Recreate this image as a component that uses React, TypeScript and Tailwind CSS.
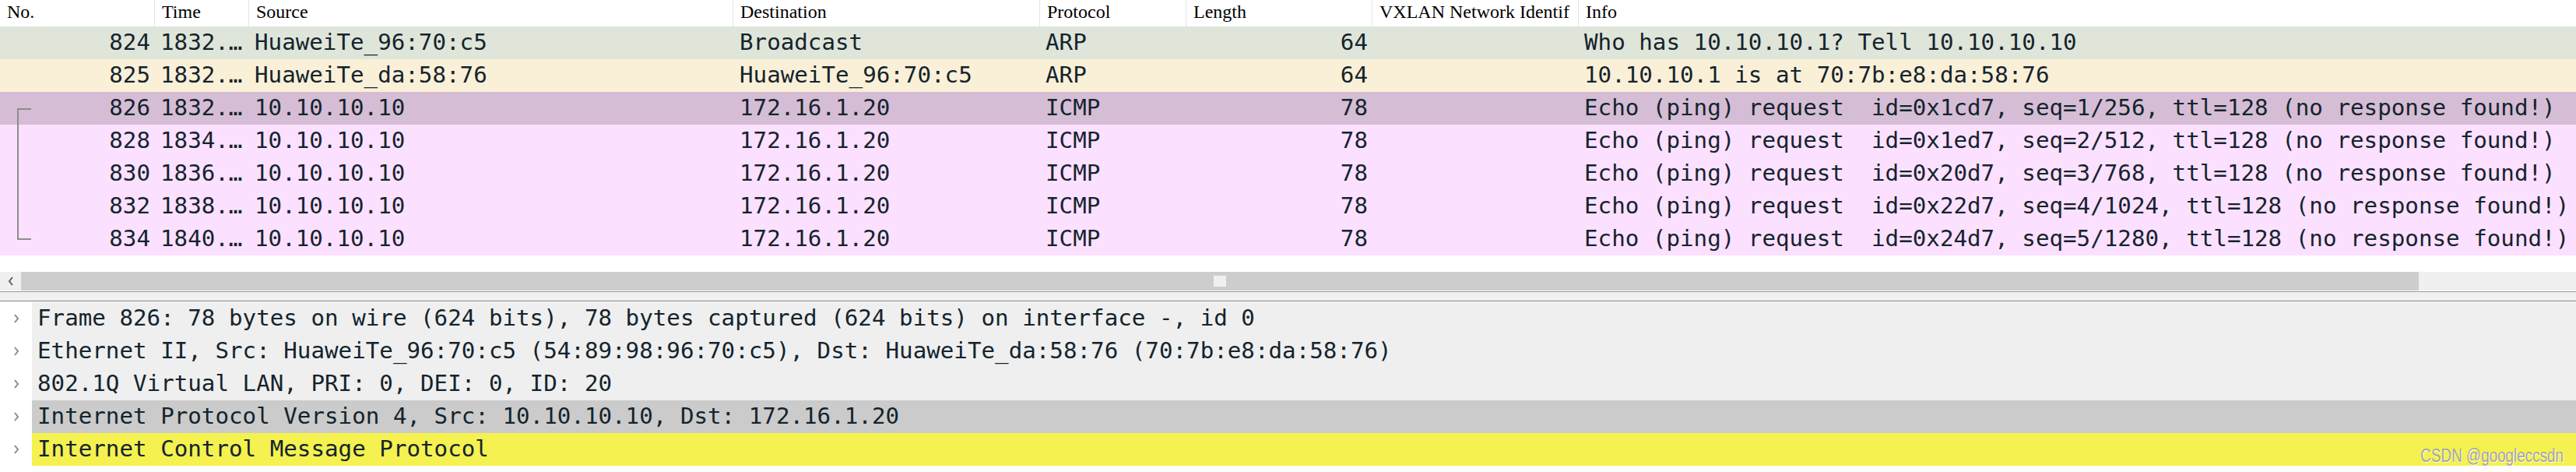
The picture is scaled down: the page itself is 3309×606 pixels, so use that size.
import React from 'react';

type Mark = 'start' | 'mid' | 'end' | null;

type Packet = {
  no: string;
  time: string;
  src: string;
  dst: string;
  proto: string;
  len: string;
  info: string;
  bg: string;
  mark: Mark;
};

const columns = [
  { label: 'No.', w: 'w-[199px]' },
  { label: 'Time', w: 'w-[121px]' },
  { label: 'Source', w: 'w-[622px]' },
  { label: 'Destination', w: 'w-[394px]' },
  { label: 'Protocol', w: 'w-[188px]' },
  { label: 'Length', w: 'w-[239px]' },
  { label: 'VXLAN Network Identif', w: 'w-[265px]' },
  { label: 'Info', w: 'flex-1' },
];

const echo = (id: string, seq: string) =>
  `Echo (ping) request  id=${id}, seq=${seq}, ttl=128 (no response found!)`;

const packets: Packet[] = [
  { no: '824', time: '1832.…', src: 'HuaweiTe_96:70:c5', dst: 'Broadcast', proto: 'ARP', len: '64', info: 'Who has 10.10.10.1? Tell 10.10.10.10', bg: 'bg-[#dfe5d9]', mark: null },
  { no: '825', time: '1832.…', src: 'HuaweiTe_da:58:76', dst: 'HuaweiTe_96:70:c5', proto: 'ARP', len: '64', info: '10.10.10.1 is at 70:7b:e8:da:58:76', bg: 'bg-[#faf0d7]', mark: null },
  { no: '826', time: '1832.…', src: '10.10.10.10', dst: '172.16.1.20', proto: 'ICMP', len: '78', info: echo('0x1cd7', '1/256'), bg: 'bg-[#d6bdd6]', mark: 'start' },
  { no: '828', time: '1834.…', src: '10.10.10.10', dst: '172.16.1.20', proto: 'ICMP', len: '78', info: echo('0x1ed7', '2/512'), bg: 'bg-[#fce0ff]', mark: 'mid' },
  { no: '830', time: '1836.…', src: '10.10.10.10', dst: '172.16.1.20', proto: 'ICMP', len: '78', info: echo('0x20d7', '3/768'), bg: 'bg-[#fce0ff]', mark: 'mid' },
  { no: '832', time: '1838.…', src: '10.10.10.10', dst: '172.16.1.20', proto: 'ICMP', len: '78', info: echo('0x22d7', '4/1024'), bg: 'bg-[#fce0ff]', mark: 'mid' },
  { no: '834', time: '1840.…', src: '10.10.10.10', dst: '172.16.1.20', proto: 'ICMP', len: '78', info: echo('0x24d7', '5/1280'), bg: 'bg-[#fce0ff]', mark: 'end' },
];

const details = [
  { text: 'Frame 826: 78 bytes on wire (624 bits), 78 bytes captured (624 bits) on interface -, id 0', bg: 'bg-[#efefef]' },
  { text: 'Ethernet II, Src: HuaweiTe_96:70:c5 (54:89:98:96:70:c5), Dst: HuaweiTe_da:58:76 (70:7b:e8:da:58:76)', bg: 'bg-[#efefef]' },
  { text: '802.1Q Virtual LAN, PRI: 0, DEI: 0, ID: 20', bg: 'bg-[#efefef]' },
  { text: 'Internet Protocol Version 4, Src: 10.10.10.10, Dst: 172.16.1.20', bg: 'bg-[#cbcbcb]' },
  { text: 'Internet Control Message Protocol', bg: 'bg-[#f5f150]' },
];

function RelatedMark({ mark }: { mark: Mark }) {
  if (!mark) return null;
  const d =
    mark === 'start' ? 'M40 22H23V42' : mark === 'end' ? 'M23 0V21H40' : 'M23 0V42';
  return (
    <svg className="absolute left-0 top-0" width="44" height="42" viewBox="0 0 44 42">
      <path d={d} fill="none" stroke="#8c8c8c" strokeWidth="2" />
    </svg>
  );
}

function PacketRow({ p }: { p: Packet }) {
  return (
    <div className={`flex h-[42px] leading-[40px] whitespace-pre ${p.bg}`}>
      <div className="relative w-[199px] pr-[6px] text-right">
        <RelatedMark mark={p.mark} />
        {p.no}
      </div>
      <div className="w-[121px] pl-[7px] overflow-hidden">{p.time}</div>
      <div className="w-[622px] pl-[7px] overflow-hidden">{p.src}</div>
      <div className="w-[394px] pl-[8px] overflow-hidden">{p.dst}</div>
      <div className="w-[188px] pl-[7px] overflow-hidden">{p.proto}</div>
      <div className="w-[239px] pr-[6px] text-right">{p.len}</div>
      <div className="w-[265px]" />
      <div className="flex-1 pl-[7px] overflow-hidden">{p.info}</div>
    </div>
  );
}

export default function App() {
  return (
    <div className="relative flex h-[606px] w-[3309px] flex-col overflow-hidden bg-white font-['DejaVu_Sans_Mono',monospace] text-[29.2px] text-[#14242d]">
      {/* packet list header */}
      <div className="flex h-[34px] font-['Liberation_Serif',serif] text-[24px] leading-[30px] text-black">
        {columns.map((c, i) => (
          <div
            key={c.label}
            className={`${c.w} h-full whitespace-nowrap pl-[9px] ${i < columns.length - 1 ? 'border-r border-[#e5e5e5]' : ''}`}
          >
            {c.label}
          </div>
        ))}
      </div>

      {/* packet rows */}
      <div className="flex flex-col">
        {packets.map((p) => (
          <PacketRow key={p.no} p={p} />
        ))}
      </div>

      <div className="h-[21px] shrink-0" />

      {/* horizontal scrollbar */}
      <div className="flex h-[24px] shrink-0">
        <div className="flex w-[27px] items-center justify-center bg-[#f0f0f0]">
          <svg width="10" height="14" viewBox="0 0 10 14">
            <path d="M7 2L3 7L7 12" fill="none" stroke="#606060" strokeWidth="2" />
          </svg>
        </div>
        <div className="flex flex-1 items-center justify-center bg-[#cdcdcd]">
          <div className="h-[14px] w-[16px] bg-[#f0f0f0]" />
        </div>
        <div className="w-[202px] bg-[#f0f0f0]" />
      </div>

      {/* splitter */}
      <div className="h-[1px] shrink-0" />
      <div className="h-[1px] shrink-0 bg-[#9a9a9a]" />
      <div className="h-[11px] shrink-0 bg-[#f0f0f0]" />
      <div className="h-[1px] shrink-0 bg-[#828282]" />
      <div className="h-[1px] shrink-0" />

      {/* packet details */}
      <div className="flex flex-col">
        {details.map((d) => (
          <div key={d.text} className="flex h-[42px] leading-[40px]">
            <div className="flex w-[41px] items-center justify-center pl-[1px]">
              <svg width="10" height="14" viewBox="0 0 10 14">
                <path d="M3 2L7 7L3 12" fill="none" stroke="#8a8a8a" strokeWidth="2" />
              </svg>
            </div>
            <div className={`flex-1 whitespace-pre pl-[7px] ${d.bg}`}>{d.text}</div>
          </div>
        ))}
      </div>

      {/* watermark */}
      <div className="absolute bottom-[9px] right-[16px] origin-right scale-x-[0.82] font-['Liberation_Sans',sans-serif] text-[23px] leading-[24px] text-[#a3a3a3] [text-shadow:1px_1px_0_#ffffff]">
        CSDN @googleccsdn
      </div>
    </div>
  );
}
